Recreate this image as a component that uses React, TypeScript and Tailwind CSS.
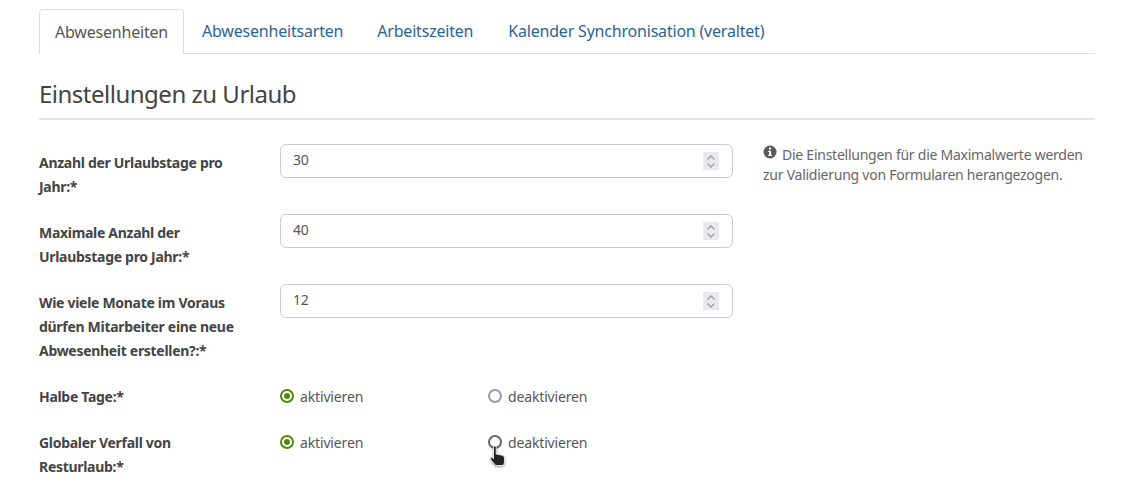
const font = "font-['Noto_Sans','Open_Sans',sans-serif]"

function NumberField({ value }: { value: number }) {
  return (
    <div className="flex h-[34px] w-[453px] items-center justify-between rounded-[6px] border border-[#cccccc] pl-[12px] pr-[13px] text-[14px] tracking-[-0.15px] text-[#555555]">
      <span className="relative top-[-2px]">{value}</span>
      <span className="flex h-[18px] w-[16px] items-center justify-center bg-[#e9e9ed]">
        <svg width="10" height="15" viewBox="0 0 10 15" fill="none" stroke="#a0a0a0" strokeWidth="1.3">
          <path d="M1.5 5.500 5 2l3.500 3.500" />
          <path d="M1.5 9.500 5 13l3.500-3.500" />
        </svg>
      </span>
    </div>
  )
}

function Radio({ label, checked, hover }: { label: string; checked?: boolean; hover?: boolean }) {
  return (
    <label className="flex w-[208px] items-center gap-[6px] text-[14px] leading-[24px] tracking-[-0.15px] text-[#555555]">
      {checked ? (
        <span className="mb-[2px] flex h-[14px] w-[14px] items-center justify-center rounded-full border-2 border-[#4e8a12]">
          <span className="h-[6px] w-[6px] rounded-full bg-[#4e8a12]" />
        </span>
      ) : (
        <span className={`mb-[2px] h-[14px] w-[14px] rounded-full border-2 ${hover ? 'border-[#666666]' : 'border-[#9a9aa6]'}`} />
      )}
      {label}
    </label>
  )
}

function RadioPair({ hover }: { hover?: boolean }) {
  return (
    <div className="flex">
      <Radio label="aktivieren" checked />
      <Radio label="deaktivieren" hover={hover} />
    </div>
  )
}

function FieldRow({ label, children }: { label: React.ReactNode; children: React.ReactNode }) {
  return (
    <div className="flex">
      <div className="w-[241px] pt-[7px] pr-[5px] text-[14px] font-bold leading-[24px] tracking-[-0.3px] text-[#444444]">{label}</div>
      <div>{children}</div>
    </div>
  )
}

export default function App() {
  return (
    <div className={`${font} h-[497px] overflow-hidden bg-white pl-[39px] pr-[28px] pt-[9px]`}>
      <ul className="flex h-[45px] border-b border-[#dddddd] text-[16px] tracking-[-0.2px]">
        <li className="h-[45px] w-[145px] rounded-t-[4px] border border-b-0 border-[#dddddd] bg-white px-[15px] pt-[10px] text-[#555555]">Abwesenheiten</li>
        <li className="ml-[3px] px-[15px] pt-[10px] text-[#2a6496]">Abwesenheitsarten</li>
        <li className="ml-[4px] px-[15px] pt-[10px] text-[#2a6496]">Arbeitszeiten</li>
        <li className="ml-[5px] px-[15px] pt-[10px] text-[#2a6496]">Kalender Synchronisation (veraltet)</li>
      </ul>
      <h2 className="mt-[24px] h-[42px] border-b-2 border-[#e5e5e5] text-[24px] leading-[32px] tracking-[-0.5px] text-[#444444]">Einstellungen zu Urlaub</h2>
      <div className="mt-[24px] flex">
        <div className="flex w-[694px] flex-col gap-[15px]">
          <FieldRow label={<>Anzahl der Urlaubstage pro<br />Jahr:*</>}>
            <NumberField value={30} />
          </FieldRow>
          <FieldRow label={<>Maximale Anzahl der<br />Urlaubstage pro Jahr:*</>}>
            <NumberField value={40} />
          </FieldRow>
          <FieldRow label={<>Wie viele Monate im Voraus<br />dürfen Mitarbeiter eine neue<br />Abwesenheit erstellen?:*</>}>
            <NumberField value={12} />
          </FieldRow>
          <FieldRow label="Halbe Tage:*">
            <div className="pt-[7px]"><RadioPair /></div>
          </FieldRow>
          <FieldRow label={<>Globaler Verfall von<br />Resturlaub:*</>}>
            <div className="relative pt-[7px]">
              <RadioPair hover />
              {/* hand cursor over the second radio */}
              <svg className="absolute left-[209px] top-[21px] drop-shadow-[0_1px_1px_rgba(0,0,0,0.4)]" width="18" height="23" viewBox="0 0 18 23">
                <path d="M4.500 2.200c0-1.600 2.700-1.600 2.700 0V9l5.300 1.100c2 .5 3 1.400 3 3v3.700c0 1.500-.5 2.500-1.300 3.700H6.500C5.200 18.500 2 15.500 1.500 14c-.5-1.500 1-2.300 2-1.300l1 1z" fill="#222222" stroke="#f4f4f4" strokeWidth="0.9" />
              </svg>
            </div>
          </FieldRow>
        </div>
        <p className="ml-[30px] flex-1 pt-[1px] text-[14px] leading-[20px] tracking-[-0.25px] text-[#666666]">
          <svg className="relative top-[-4px] mr-[5px] inline" width="14" height="14" viewBox="0 0 14 14">
            <circle cx="7" cy="7" r="6.500" fill="#5a5a5a" />
            <rect x="6" y="2.500" width="2" height="2" fill="#ffffff" />
            <path d="M5.200 5.800H8v4h1v1.200H5.200V9.800h1V7H5.200z" fill="#ffffff" />
          </svg>
          Die Einstellungen für die Maximalwerte werden zur Validierung von Formularen herangezogen.
        </p>
      </div>
    </div>
  )
}
